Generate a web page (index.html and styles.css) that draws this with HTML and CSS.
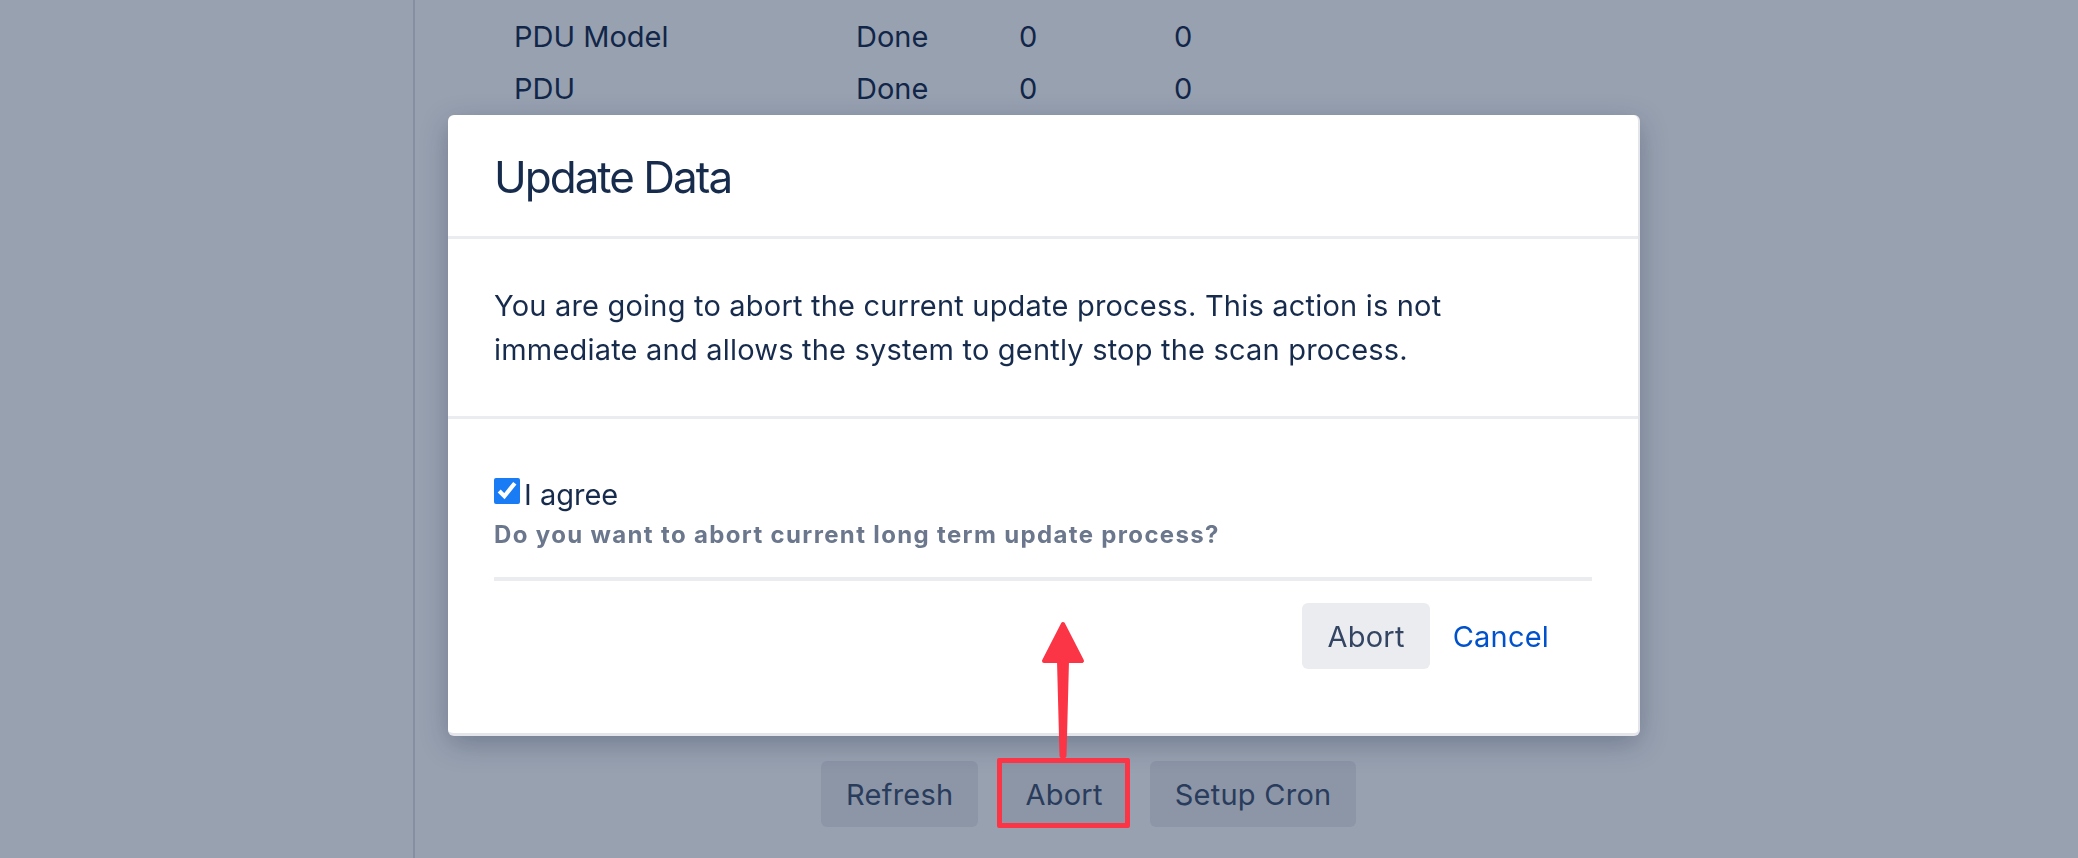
FILE: index.html
```html
<!DOCTYPE html>
<html lang="en">
<head>
<meta charset="utf-8">
<title>Update Data</title>
<link rel="stylesheet" href="styles.css">
</head>
<body>
<div class="page">
  <aside class="sidebar"></aside>
  <main class="content">
    <div class="status-table">
      <div class="status-row"><span>PDU Model</span><span>Done</span><span>0</span><span>0</span></div>
      <div class="status-row"><span>PDU</span><span>Done</span><span>0</span><span>0</span></div>
    </div>
    <div class="actions">
      <button class="btn">Refresh</button>
      <span class="highlight"><button class="btn">Abort</button><span class="highlight-box"></span></span>
      <button class="btn">Setup Cron</button>
    </div>
  </main>
</div>
<div class="backdrop"></div>
<div class="modal">
  <div class="modal-header"><h2 class="modal-title">Update Data</h2></div>
  <div class="modal-body">
    <p class="modal-text">You are going to abort the current update process. This action is not immediate and allows the system to gently stop the scan process.</p>
  </div>
  <div class="modal-footer">
    <div class="form-field">
      <label class="agree"><input type="checkbox" checked>I agree</label>
      <div class="hint">Do you want to abort current long term update process?</div>
    </div>
    <div class="modal-actions">
      <button class="btn btn-modal">Abort</button>
      <button class="btn-link">Cancel</button>
    </div>
  </div>
</div>
<svg class="arrow" width="54" height="146" viewBox="0 0 54 146">
  <path d="M27 8 L46 45 L31 45 L28.5 140 L25.5 140 L23 45 L8 45 Z" fill="#fb3545" stroke="#fb3545" stroke-width="4" stroke-linejoin="round"/>
</svg>
</body>
</html>
```
FILE: styles.css
```css
html, body {
  margin: 0;
  height: 100%;
}
body {
  font-family: Inter, "Liberation Sans", sans-serif;
  color: #172B4D;
  background: #fff;
  overflow: hidden;
}
.page {
  display: flex;
  height: 858px;
}
.sidebar {
  flex: none;
  width: 413px;
  border-right: 2px solid #dfe1e6;
}
.content {
  flex: 1;
  padding: 10px 0 0 99px;
}
.status-row {
  display: grid;
  grid-template-columns: 342px 163px 155px auto;
  height: 52px;
  align-items: center;
  font-size: 29px;
}
.actions {
  display: flex;
  gap: 22px;
  margin: 647px 0 0 307px;
}
.btn {
  font-family: inherit;
  font-size: 29px;
  letter-spacing: 0.25px;
  height: 66px;
  padding: 0 25px;
  border: 0;
  border-radius: 6px;
  background: #ebecf0;
  color: #42526E;
}
.highlight {
  position: relative;
  display: inline-flex;
}
.highlight-box {
  position: absolute;
  inset: -3px -2px -1px -3px;
  border: 5px solid #fb3545;
  border-radius: 2px;
  z-index: 20;
}
.backdrop {
  position: fixed;
  inset: 0;
  background: rgba(9, 30, 66, 0.42);
  z-index: 10;
}
.modal {
  position: fixed;
  left: 448px;
  top: 115px;
  width: 1190px;
  background: #fff;
  border-right: 2px solid #e4e5ea;
  border-bottom: 3px solid #e4e5ea;
  border-radius: 6px;
  box-shadow: 0 8px 28px rgba(9, 30, 66, 0.28);
  z-index: 11;
}
.modal-header {
  box-sizing: border-box;
  height: 124px;
  padding: 3px 46px 0;
  display: flex;
  align-items: center;
  border-bottom: 3px solid #ebecf0;
}
.modal-title {
  margin: 0;
  font-size: 44px;
  font-weight: 400;
  letter-spacing: -2px;
  line-height: 53px;
}
.modal-body {
  padding: 45px 46px 44px;
  border-bottom: 3px solid #ebecf0;
}
.modal-text {
  margin: 0;
  max-width: 1040px;
  font-size: 29px;
  letter-spacing: 0.2px;
  line-height: 44px;
}
.modal-footer {
  padding: 56px 46px 64px;
}
.form-field {
  padding-bottom: 26px;
  border-bottom: 4px solid #ebecf0;
}
.agree {
  display: flex;
  align-items: center;
  font-size: 29px;
  line-height: 40px;
}
.agree input {
  width: 26px;
  height: 26px;
  margin: 0 4px 9px 0;
  accent-color: #1a7cf5;
}
.hint {
  margin-top: 4px;
  font-size: 24px;
  font-weight: 700;
  letter-spacing: 1.35px;
  line-height: 32px;
  color: #6B778C;
}
.modal-actions {
  display: flex;
  justify-content: flex-end;
  margin-top: 22px;
  padding-right: 20px;
}
.btn-modal {
  color: #344563;
}
.btn-link {
  font-family: inherit;
  font-size: 29px;
  letter-spacing: 0.2px;
  height: 66px;
  padding: 0 23px;
  border: 0;
  background: transparent;
  color: #0052CC;
}
.arrow {
  position: fixed;
  left: 1036px;
  top: 616px;
  z-index: 20;
}
```
